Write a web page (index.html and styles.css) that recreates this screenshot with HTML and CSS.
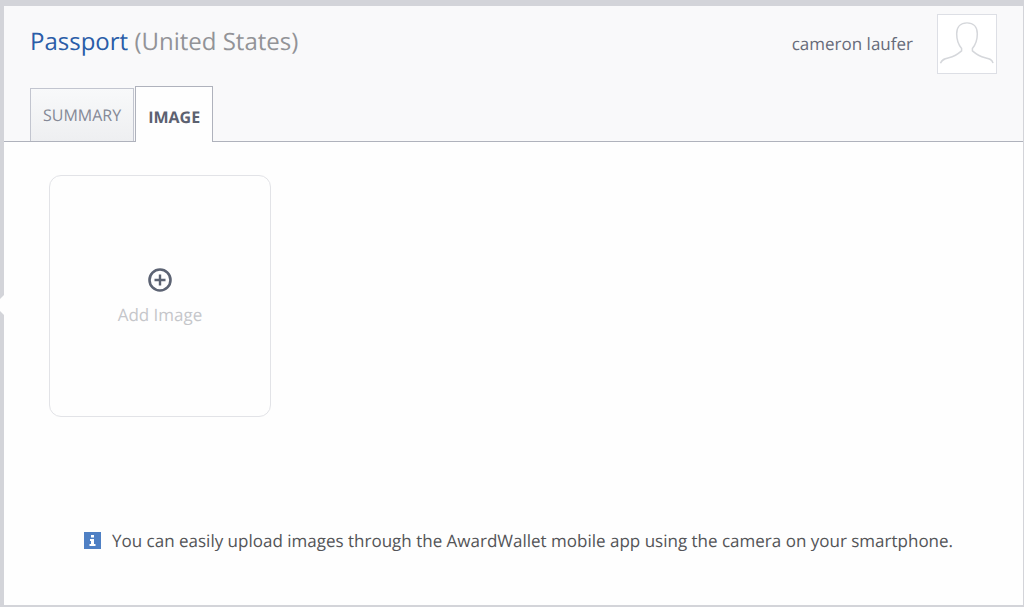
FILE: index.html
```html
<!DOCTYPE html>
<html lang="en">
<head>
    <meta charset="UTF-8">
    <meta name="viewport" content="width=device-width, initial-scale=1.0">
    <title>Passport (United States)</title>
    <link rel="stylesheet" href="styles.css">
</head>
<body>
    <main class="panel">
        <header class="panel-header">
            <div class="title-row">
                <h1><a href="#passport">Passport</a> (United States)</h1>
                <div class="owner">
                    <span class="owner-name">cameron laufer</span>
                    <svg class="avatar" viewBox="0 0 59 59" fill="none" stroke="#d5d7db" stroke-width="1.5" aria-hidden="true">
                        <path d="M2.5 49C4 45 7 44.500 11 43.500C17 42 20 40 24 36.500V34C21.500 31 19 25 19 19C19 12 23 8 29.500 8C36 8 40 12 40 19C40 25 37.500 31 35 34V36.500C39 40 42 42 48 43.500C52 44.500 55 45 56 49"/>
                    </svg>
                </div>
            </div>
            <nav class="tabs">
                <a class="tab" href="#summary">SUMMARY</a>
                <a class="tab active" href="#image" aria-current="page">IMAGE</a>
            </nav>
        </header>

        <section class="content">
            <button type="button" class="add-image">
                <svg class="icon-plus" viewBox="0 0 24 24" fill="none" stroke="#5c6373" aria-hidden="true">
                    <circle cx="12" cy="12" r="10.500" stroke-width="2.600"/>
                    <path d="M12 6.500v11M6.500 12h11" stroke-width="2.400"/>
                </svg>
                <span>Add Image</span>
            </button>
            <p class="info">
                <svg class="icon-info" viewBox="0 0 17 17" aria-hidden="true">
                    <path fill="#4f80c4" d="M0 0h17v17H0z"/>
                    <path fill="#fff" d="M7 3h3v2.500H7zM6 7h4v5h1.500v2h-6v-2H7V9H6z"/>
                </svg>
                You can easily upload images through the AwardWallet mobile app using the camera on your smartphone.
            </p>
        </section>
    </main>
</body>
</html>
```
FILE: styles.css
```css
* {
    box-sizing: border-box;
}
body {
    margin: 0;
    min-height: 100vh;
    display: flex;
    padding: 6px 1px 2px 4px;
    background-color: #d3d4d9;
    font-family: "Open Sans", sans-serif;
    font-size: 17px;
    text-rendering: geometricPrecision;
    color: #535457;
}
a {
    text-decoration: none;
}
.panel {
    position: relative;
    flex: 1;
    background-color: #fefefe;
}
/* small notch pointing at the left menu */
.panel::before {
    content: "";
    position: absolute;
    left: -10px;
    top: 289px;
    border: 10px solid transparent;
    border-left: 0;
    border-right-color: #fefefe;
}
.panel-header {
    padding: 8px 26px 0;
    background-color: #f9f9fa;
    border-bottom: 1px solid #afb2bc;
}
.title-row {
    display: flex;
    justify-content: space-between;
    align-items: center;
}
h1 {
    margin: 0 0 6px;
    font-size: 24px;
    font-weight: 400;
    color: #929397;
}
h1 a {
    color: #2a5da8;
}
.owner {
    display: flex;
    align-items: center;
    gap: 24px;
    color: #666b79;
}
.owner-name {
    padding-bottom: 2px;
}
.avatar {
    width: 60px;
    height: 60px;
    border: 1px solid #dddfe5;
    background-color: #fff;
}
.tabs {
    display: flex;
    align-items: flex-end;
    gap: 1px;
    margin-top: 12px;
}
.tab {
    height: 53px;
    padding: 0 12px;
    border: 1px solid #c2c5cf;
    border-bottom: 0;
    background: linear-gradient(#f8f9fa, #eeeff1);
    font-size: 16px;
    line-height: 52px;
    color: #858997;
}
.tab.active {
    height: 56px;
    margin-bottom: -1px;
    border-color: #afb2bc;
    background: #fefefe;
    line-height: 60px;
    font-weight: 700;
    color: #5c6170;
}
.content {
    padding: 33px 45px 48px;
}
.add-image {
    display: flex;
    flex-direction: column;
    align-items: center;
    justify-content: center;
    gap: 11px;
    width: 222px;
    height: 242px;
    padding: 2px 0 0;
    border: 1px solid #e2e3e7;
    border-radius: 12px;
    background: none;
    font: inherit;
    text-rendering: inherit;
    color: #c5c6ca;
    cursor: pointer;
}
.icon-plus {
    width: 24px;
    height: 24px;
}
.info {
    display: flex;
    align-items: center;
    gap: 11px;
    margin: 112px 0 0;
    padding-left: 35px;
}
.icon-info {
    flex: none;
    width: 17px;
    height: 17px;
}
```
